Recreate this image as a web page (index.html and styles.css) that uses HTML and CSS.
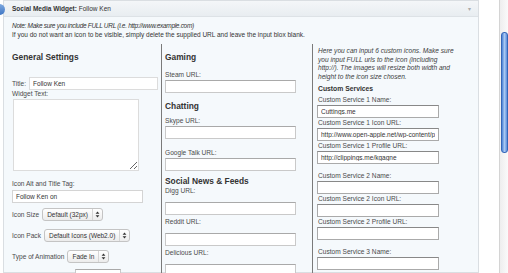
FILE: index.html
```html
<!DOCTYPE html>
<html lang="en">

<head>
    <meta charset="UTF-8">
    <meta name="viewport" content="width=device-width, initial-scale=1.0">
    <title>Social Media Widget</title>
    <link rel="stylesheet" href="styles.css">
</head>

<body>

    <div class="screen">
        <div class="widget">
            <span class="handle"></span>

            <div class="widget-top">
                <h3><strong>Social Media Widget:</strong> Follow Ken</h3>
                <span class="toggle">&#9662;</span>
            </div>

            <div class="widget-inside">
                <p class="note">
                    <em>Note: Make sure you include FULL URL (i.e. http://www.example.com)</em><br>
                    If you do not want an icon to be visible, simply delete the supplied URL and leave the input blox blank.
                </p>

                <div class="columns">
                    <!-- General settings -->
                    <div class="col col-general">
                        <h4>General Settings</h4>

                        <div class="inline title-row">
                            <label>Title:</label>
                            <input type="text" class="title-input" value="Follow Ken">
                        </div>

                        <div class="field text-field">
                            <label>Widget Text:</label>
                            <textarea></textarea>
                        </div>

                        <div class="field alt-field">
                            <label>Icon Alt and Title Tag:</label>
                            <input type="text" class="alt-input" value="Follow Ken on">
                        </div>

                        <div class="inline select-row size-row">
                            <label>Icon Size</label>
                            <span class="select">
                                <span class="select-text">Default (32px)</span>
                                <span class="select-arrows">
                                    <svg width="5" height="7" viewBox="0 0 5 7"><path d="M0.6 2.8 L2.5 0.6 L4.4 2.8 Z M0.6 4.2 L2.5 6.4 L4.4 4.2 Z" fill="#333"/></svg>
                                </span>
                            </span>
                        </div>

                        <div class="inline select-row">
                            <label>Icon Pack</label>
                            <span class="select">
                                <span class="select-text">Default Icons (Web2.0)</span>
                                <span class="select-arrows">
                                    <svg width="5" height="7" viewBox="0 0 5 7"><path d="M0.6 2.8 L2.5 0.6 L4.4 2.8 Z M0.6 4.2 L2.5 6.4 L4.4 4.2 Z" fill="#333"/></svg>
                                </span>
                            </span>
                        </div>

                        <div class="inline select-row">
                            <label>Type of Animation</label>
                            <span class="select">
                                <span class="select-text">Fade In</span>
                                <span class="select-arrows">
                                    <svg width="5" height="7" viewBox="0 0 5 7"><path d="M0.6 2.8 L2.5 0.6 L4.4 2.8 Z M0.6 4.2 L2.5 6.4 L4.4 4.2 Z" fill="#333"/></svg>
                                </span>
                            </span>
                        </div>

                        <input type="text" class="more-input">
                    </div>

                    <!-- Services -->
                    <div class="col col-services">
                        <h4>Gaming</h4>
                        <div class="group group-tight">
                            <div class="field">
                                <label>Steam URL:</label>
                                <input type="text">
                            </div>
                        </div>

                        <h4>Chatting</h4>
                        <div class="group group-tight group-chat">
                            <div class="field">
                                <label>Skype URL:</label>
                                <input type="text">
                            </div>
                            <div class="field">
                                <label>Google Talk URL:</label>
                                <input type="text">
                            </div>
                        </div>

                        <h4 class="social-title">Social News &amp; Feeds</h4>
                        <div class="group group-loose">
                            <div class="field">
                                <label>Digg URL:</label>
                                <input type="text">
                            </div>
                            <div class="field">
                                <label>Reddit URL:</label>
                                <input type="text">
                            </div>
                            <div class="field">
                                <label>Delicious URL:</label>
                                <input type="text">
                            </div>
                        </div>
                    </div>

                    <!-- Custom services -->
                    <div class="col col-custom">
                        <p class="intro">Here you can input 6 custom icons. Make sure you input FULL urls to the icon (including http://). The images will resize both width and height to the icon size chosen.</p>
                        <h5>Custom Services</h5>

                        <div class="service">
                            <div class="field">
                                <label>Custom Service 1 Name:</label>
                                <input type="text" value="Cuttings.me">
                            </div>
                            <div class="field">
                                <label>Custom Service 1 Icon URL:</label>
                                <input type="text" value="http://www.open-apple.net/wp-content/plugins/">
                            </div>
                            <div class="field">
                                <label>Custom Service 1 Profile URL:</label>
                                <input type="text" value="http://clippings.me/kgagne">
                            </div>
                        </div>

                        <div class="service">
                            <div class="field">
                                <label>Custom Service 2 Name:</label>
                                <input type="text">
                            </div>
                            <div class="field">
                                <label>Custom Service 2 Icon URL:</label>
                                <input type="text">
                            </div>
                            <div class="field">
                                <label>Custom Service 2 Profile URL:</label>
                                <input type="text">
                            </div>
                        </div>

                        <div class="service">
                            <div class="field">
                                <label>Custom Service 3 Name:</label>
                                <input type="text">
                            </div>
                        </div>
                    </div>
                </div>
            </div>
        </div>

        <div class="scrollbar">
            <div class="thumb"></div>
        </div>
    </div>

</body>

</html>
```

FILE: styles.css
```css
body {
    margin: 0;
    padding: 0;
    font-family: "Liberation Sans", Arial, sans-serif;
    background-color: #fff;
    overflow: hidden;
}

.screen {
    display: flex;
    height: 273px;
    overflow: hidden;
}

/* widget box */
.widget {
    position: relative;
    flex: none;
    width: 474px;
    margin-left: 3px;
    border: 1px solid #dadee2;
    background-color: #f5f9fc;
}

.handle {
    position: absolute;
    left: -10px;
    top: 3px;
    width: 11px;
    height: 11px;
    border-radius: 50%;
    background: linear-gradient(to bottom, #7fa9e0, #3f76c4);
}

.widget-top {
    display: flex;
    align-items: center;
    justify-content: space-between;
    height: 15px;
    padding: 0 7px 0 8px;
    background: linear-gradient(to bottom, #f4f6f8, #e8edf1);
    border-bottom: 1px solid #dde2e6;
}

.widget-top h3 {
    margin: 0;
    font-size: 6.5px;
    font-weight: normal;
    color: #333;
}

.toggle {
    font-size: 6px;
    color: #aaa;
}

.widget-inside {
    padding: 4px 0 0 8px;
}

.note {
    margin: 0;
    font-size: 6.5px;
    line-height: 9px;
    color: #333;
}

.note em {
    letter-spacing: -0.3px;
}

.columns {
    display: flex;
    margin-top: 5px;
    height: 240px;
}

.col {
    flex: none;
}

.col-general {
    width: 149px;
    border-right: 1px solid #7a7a7a;
}

.col-services {
    width: 147px;
    padding-left: 3px;
    border-right: 1px solid #7a7a7a;
}

.col-custom {
    width: 150px;
    padding-left: 5px;
}

h4 {
    margin: 8px 0 0;
    font-size: 8.4px;
    line-height: 10px;
    color: #333;
}

label {
    display: block;
    font-size: 6.6px;
    line-height: 8px;
    color: #4a4a4a;
}

input,
textarea {
    display: block;
    box-sizing: border-box;
    height: 13px;
    margin: 0;
    padding: 0 3px;
    font-family: "Liberation Sans", Arial, sans-serif;
    font-size: 6.5px;
    color: #333;
    background-color: #fff;
    border: 1px solid #c9c9c9;
    border-top-color: #a9a9a9;
    border-radius: 0;
}

.inline {
    display: flex;
    align-items: center;
}

.inline label {
    display: inline;
    margin-right: 3px;
}

/* general column */
.title-row {
    margin-top: 15px;
}

.title-input {
    width: 129px;
    border-color: #dcdcdc;
}

.text-field textarea {
    width: 126px;
    height: 72px;
    margin-top: 1px;
    margin-left: 1px;
    border-color: #dcdcdc;
    resize: both;
}

.alt-field {
    margin-top: 9px;
}

.alt-input {
    width: 131px;
    margin-top: 2px;
    border-color: #d4d4d4;
}

.select-row {
    margin-top: 8px;
}

.size-row {
    margin-top: 5px;
}

.select {
    display: inline-flex;
    align-items: center;
    height: 13px;
    box-sizing: border-box;
    border: 1px solid #c4c4c4;
    border-radius: 3px;
    background: linear-gradient(to bottom, #fff, #ececec);
    font-size: 6.5px;
    color: #333;
}

.select-text {
    padding: 0 4px;
}

.select-arrows {
    display: flex;
    align-items: center;
    height: 100%;
    padding: 0 2px;
    border-left: 1px solid #d6d6d6;
}

.more-input {
    width: 46px;
    margin: 6px 0 0 63px;
}

/* services column */
.col-services input {
    width: 131px;
}

.group-tight .field {
    margin-top: 10px;
}

.group-tight .field:first-child {
    margin-top: 9px;
}

.group-chat .field:first-child {
    margin-top: 6px;
}

.group-tight input {
    margin-top: 1px;
}

.social-title {
    margin-top: 5px;
}

.group-loose .field {
    margin-top: 3px;
}

.group-loose .field:first-child {
    margin-top: 1px;
}

.group-loose input {
    margin-top: 7px;
}

/* custom column */
.intro {
    width: 137px;
    margin: 3px 0 0;
    font-size: 6.6px;
    line-height: 8.7px;
    font-style: italic;
    color: #3c3c3c;
}

h5 {
    margin: 3px 0 0;
    font-size: 6.8px;
    line-height: 8px;
    color: #333;
}

.service {
    margin-top: 8px;
}

.service:first-of-type {
    margin-top: 3px;
}

.service .field {
    margin-top: 1px;
}

.col-custom input {
    width: 122px;
    margin-top: 1px;
    margin-left: -1px;
    border-color: #aaa;
    border-top-color: #888;
}

/* window scrollbar */
.scrollbar {
    flex: none;
    width: 8px;
    margin-left: auto;
    border-left: 1px solid #d4d4d4;
    background: linear-gradient(to right, #eee, #fafafa);
}

.thumb {
    width: 5px;
    height: 119px;
    margin: 32px 0 0 1px;
    border: 1px solid #3566b8;
    border-radius: 3px;
    background: linear-gradient(to right, #4a82d6, #a9c8f2, #5a8ddb);
}
```
